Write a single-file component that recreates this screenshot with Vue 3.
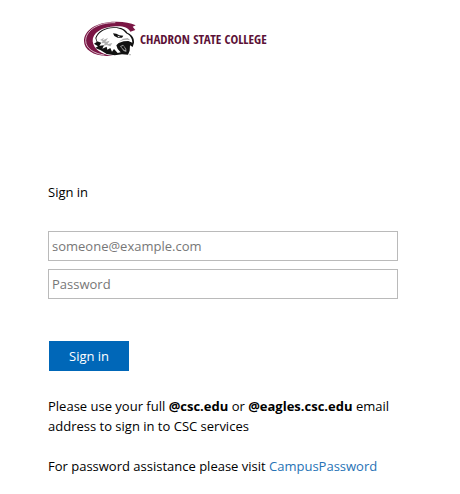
<script setup>
import { ref } from 'vue'

const username = ref('')
const password = ref('')
</script>

<template>
  <main class="login">
    <header class="brand">
      <svg class="brand-mark" viewBox="24 27 156 108" aria-hidden="true">
        <path fill="#7a1645" d="M179 40 C164 33 146 29 122 29 C60 28 24 56 24 87 C24 113 52 131 92 132 L112 132 C72 128 53 110 50 88 C49 63 76 45 119 43 C142 42 156 46 163 59 L178 54 L170 44 Z" />
        <path fill="none" stroke="#fff" stroke-width="2" d="M118 32 C62 31 29 58 29 86 C29 109 54 125 85 129" />
        <path fill="#111" d="M58 78 C66 57 86 47 112 46 C134 45 148 52 154 62 C168 67 175 79 174 92 L170 105 L162 100 L161 116 L156 128 L138 127 L116 130 L92 126 L74 115 L58 108 L66 103 L54 95 L62 90 Z" />
        <path fill="#fff" d="M61 78 C69 59 88 49 112 48 C131 47 144 54 150 64 C162 69 169 79 169 92 L157 87 L143 88 L128 93 L121 100 L125 111 L134 121 L125 123 L114 111 L108 119 L103 108 L94 113 L92 104 L79 110 L84 100 L70 101 L76 92 L63 88 Z" />
        <path fill="#b0b0b0" d="M72 84 L84 77 L80 85 L96 78 L88 90 L101 86 L94 97 L109 93 L103 103 L92 99 L84 101 L86 93 L76 94 L80 87 Z M141 80 L155 78 L163 85 L154 83 L142 84 L128 89 Z" />
        <path fill="#111" d="M111 64 L121 65 L130 70 L142 71 L138 77 L125 77 L115 72 Z" />
        <path fill="#fff" d="M124 71 L133 73 L127 75 Z" />
        <path fill="#999" d="M132 103 L141 98 L151 111 L151 120 L143 117 Z" />
        <path fill="#111" d="M135 104 L142 101 L149 113 L145 114 Z" />
        <circle cx="162" cy="128" r="2" fill="#888" />
      </svg>
      <span class="brand-name">CHADRON STATE COLLEGE</span>
    </header>

    <form class="login-form" @submit.prevent>
      <h1 class="title">Sign in</h1>
      <input
        v-model="username"
        class="field"
        type="email"
        aria-label="User account"
        placeholder="someone@example.com"
      />
      <input
        v-model="password"
        class="field"
        type="password"
        aria-label="Password"
        placeholder="Password"
      />
      <button class="submit" type="submit">Sign in</button>
    </form>

    <p class="note">
      Please use your full <b>@csc.edu</b> or <b>@eagles.csc.edu</b> email address to sign in to CSC services
    </p>
    <p class="note">
      For password assistance please visit <a href="#">CampusPassword</a>
    </p>
  </main>
</template>

<style>
body {
  margin: 0;
  background: #fff;
}
</style>

<style scoped>
.login {
  max-width: 350px;
  margin: 0 48px;
  padding-top: 21px;
  font-family: "Segoe UI", "Open Sans", "Noto Sans", sans-serif;
  font-size: 13px;
  line-height: 20px;
  color: #000;
}

.brand {
  display: flex;
  align-items: center;
  gap: 4px;
  margin-left: 36px;
}

.brand-mark {
  width: 52px;
  height: 36px;
}

.brand-name {
  font-family: "Open Sans Condensed", "Liberation Sans Narrow", "Liberation Sans", sans-serif;
  font-size: 13px;
  font-weight: 700;
  line-height: 20px;
  white-space: nowrap;
  color: #5c1237;
}

.login-form {
  display: flex;
  flex-direction: column;
  margin-top: 125px;
}

.title {
  margin: 0 0 29px;
  font-size: 13px;
  font-weight: 400;
  line-height: 20px;
}

.field {
  box-sizing: border-box;
  width: 100%;
  height: 30px;
  margin: 0 0 8px;
  padding: 0 3px;
  border: 1px solid #bababa;
  border-radius: 0;
  background: #fff;
  font: inherit;
  color: #000;
}

.field::placeholder {
  color: #777;
  opacity: 1;
}

.submit {
  align-self: flex-start;
  height: 30px;
  margin: 34px 0 0 1px;
  padding: 0 20px;
  border: 0;
  background: #0067b8;
  font: inherit;
  color: #fff;
  cursor: pointer;
}

.note {
  margin: 25px 0 0;
}

.note + .note {
  margin-top: 20px;
}

.note a {
  color: #2672b5;
  text-decoration: none;
}
</style>
